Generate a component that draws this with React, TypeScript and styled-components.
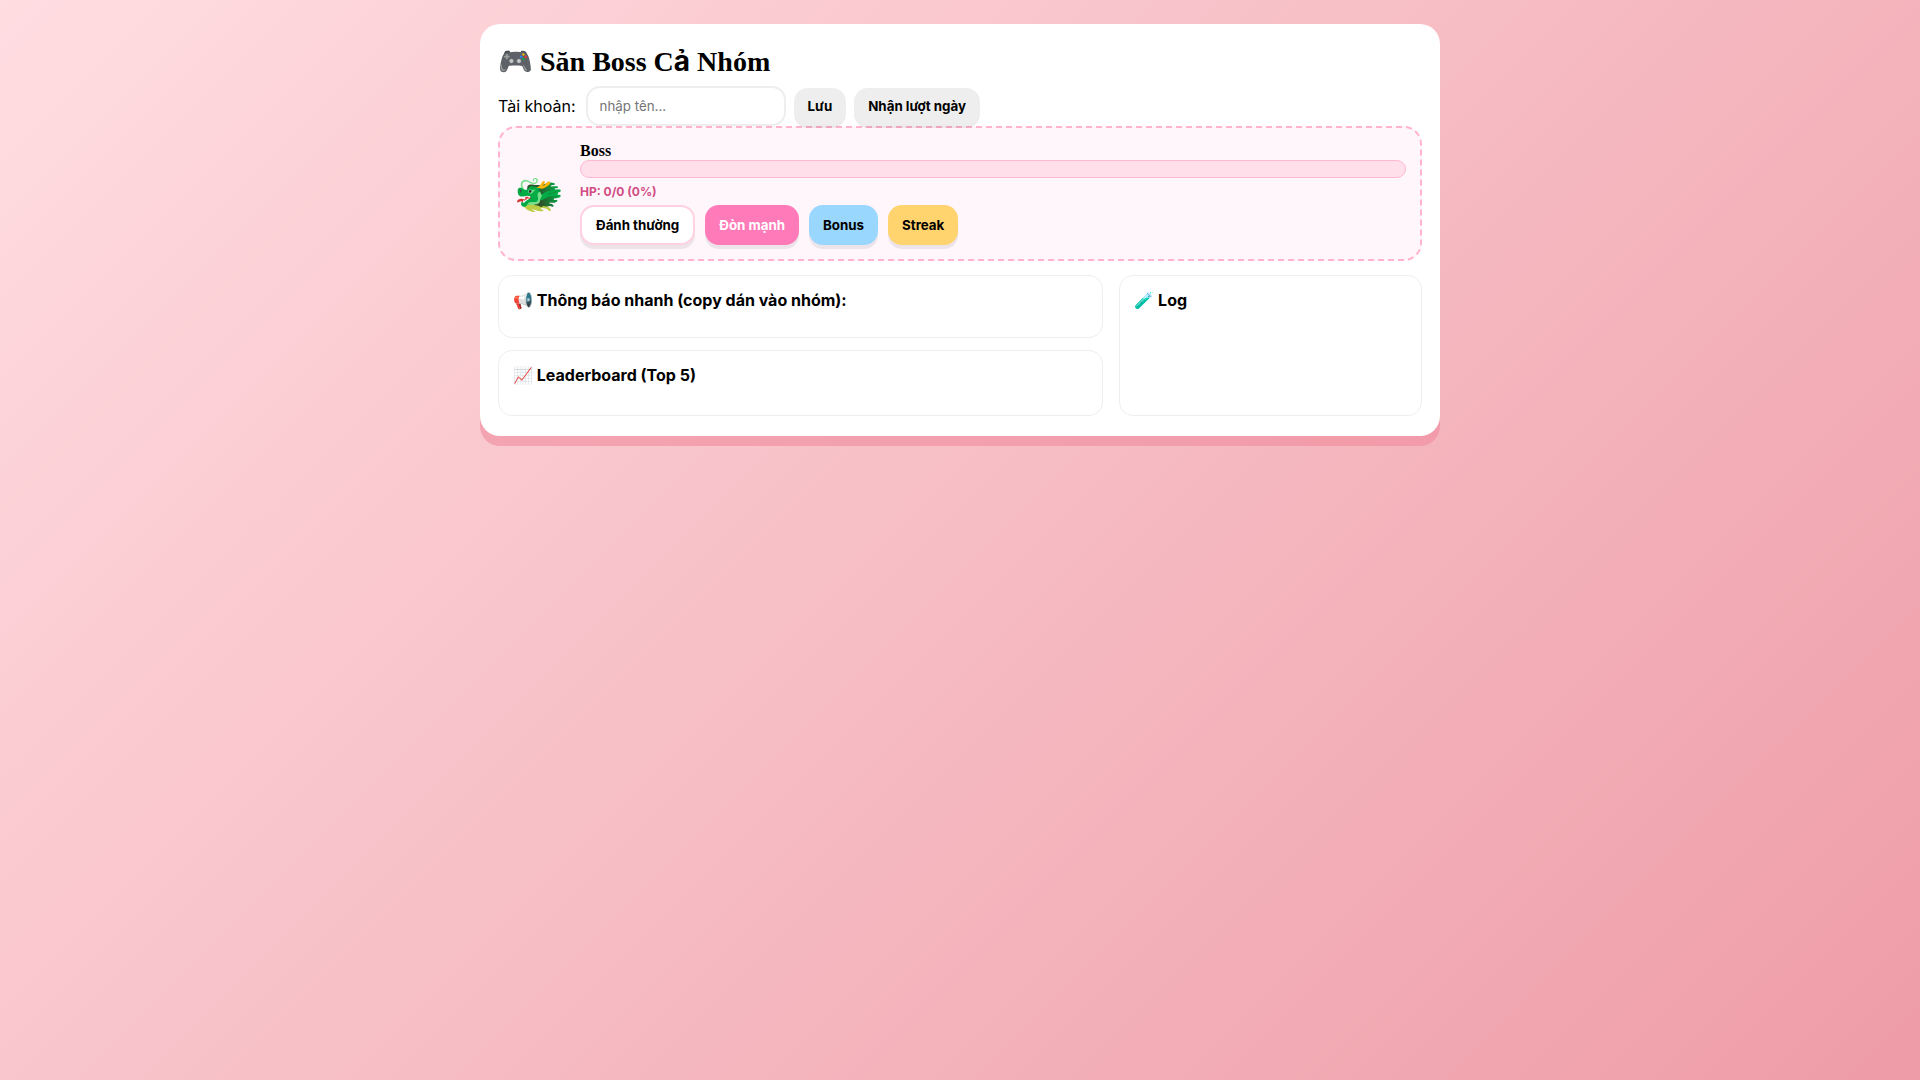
import React from 'react';
import styled, { createGlobalStyle } from 'styled-components';

const Global = createGlobalStyle`
  * { box-sizing: border-box; }
  body {
    margin: 0;
    min-height: 100vh;
    background: linear-gradient(135deg, #ffdde1, #ee9ca7);
    font-family: Inter, "Noto Sans", sans-serif;
    font-size: 16px;
    color: #000;
  }
`;

const Card = styled.main`
  max-width: 960px;
  margin: 24px auto;
  padding: 18px;
  background: #fff;
  border-radius: 20px;
  box-shadow: 0 10px 0 rgba(240, 138, 157, 0.6);
`;

const Title = styled.h1`
  margin: 0 0 4px;
  font: bold 28px/40px "Liberation Serif", serif;
`;

const Sans = styled.span`
  font-family: Inter, sans-serif;
  line-height: 1;
`;

const Account = styled.form`
  display: flex;
  align-items: center;
  gap: 8px;
`;

const AccountLabel = styled.label`
  margin-right: 2px;
`;

const NameInput = styled.input`
  width: 200px;
  height: 40px;
  padding: 0 12px;
  border: 2px solid #eee;
  border-radius: 14px;
  font-family: Inter, sans-serif;
  background: #fff;
`;

const Button = styled.button<{ $bg?: string; $fg?: string; $line?: string }>`
  min-height: 36px;
  padding: 10px 14px;
  border: ${p => (p.$line ? `2px solid ${p.$line}` : '0')};
  border-radius: 14px;
  background: ${p => p.$bg ?? '#eee'};
  color: ${p => p.$fg ?? '#000'};
  font-family: Inter, sans-serif;
  font-weight: 700;
  box-shadow: 0 4px 0 rgba(0, 0, 0, 0.07);
  cursor: pointer;
`;

const Boss = styled.section`
  display: flex;
  align-items: center;
  gap: 16px;
  padding: 14px;
  border: 2px dashed #ffb3cd;
  border-radius: 18px;
  background: #fff6fc;
`;

const Avatar = styled.div`
  font-size: 40px;
  line-height: 48px;
`;

const BossInfo = styled.div`
  flex: 1;
`;

const BossName = styled.h2`
  margin: 0;
  font: bold 16px/18px "Liberation Serif", serif;
`;

const HpBar = styled.div`
  height: 18px;
  border: 1px solid #ffb8d0;
  border-radius: 9px;
  background: #ffe0ea;
`;

const HpText = styled.p`
  margin: 6px 0;
  font-size: 12px;
  line-height: 15px;
  font-weight: 700;
  color: #d14d83;
`;

const Attacks = styled.div`
  display: flex;
  gap: 10px;
  min-height: 40px;
`;

const Columns = styled.div`
  display: grid;
  grid-template-columns: 2fr 1fr;
  gap: 16px;
  margin: 14px 0 2px;
`;

const Stack = styled.div`
  display: grid;
  gap: 12px;
`;

const Panel = styled.section<{ $space?: number }>`
  padding: 14px 14px ${p => p.$space ?? 27}px;
  border: 1px solid #eee;
  border-radius: 14px;
`;

const PanelTitle = styled.h3`
  margin: 0;
  font-size: 16px;
  line-height: 20px;
`;

export default function App() {
  return (
    <>
      <Global />
      <Card>
        <Title>🎮 Săn Boss C<Sans>ả</Sans> Nhóm</Title>
        <Account onSubmit={e => e.preventDefault()}>
          <AccountLabel htmlFor="name">Tài khoản:</AccountLabel>
          <NameInput id="name" placeholder="nhập tên..." />
          <Button type="submit">Lưu</Button>
          <Button type="button">Nhận lượt ngày</Button>
        </Account>
        <Boss>
          <Avatar>🐲</Avatar>
          <BossInfo>
            <BossName>Boss</BossName>
            <HpBar />
            <HpText>HP: 0/0 (0%)</HpText>
            <Attacks>
              <Button $bg="#fff" $line="#ffd1e1">Đánh thường</Button>
              <Button $bg="#ff7ab8" $fg="#fff">Đòn mạnh</Button>
              <Button $bg="#9ad7ff">Bonus</Button>
              <Button $bg="#ffd36e">Streak</Button>
            </Attacks>
          </BossInfo>
        </Boss>
        <Columns>
          <Stack>
            <Panel>
              <PanelTitle>📢 Thông báo nhanh (copy dán vào nhóm):</PanelTitle>
            </Panel>
            <Panel $space={30}>
              <PanelTitle>📈 Leaderboard (Top 5)</PanelTitle>
            </Panel>
          </Stack>
          <Panel>
            <PanelTitle>🧪 Log</PanelTitle>
          </Panel>
        </Columns>
      </Card>
    </>
  );
}
